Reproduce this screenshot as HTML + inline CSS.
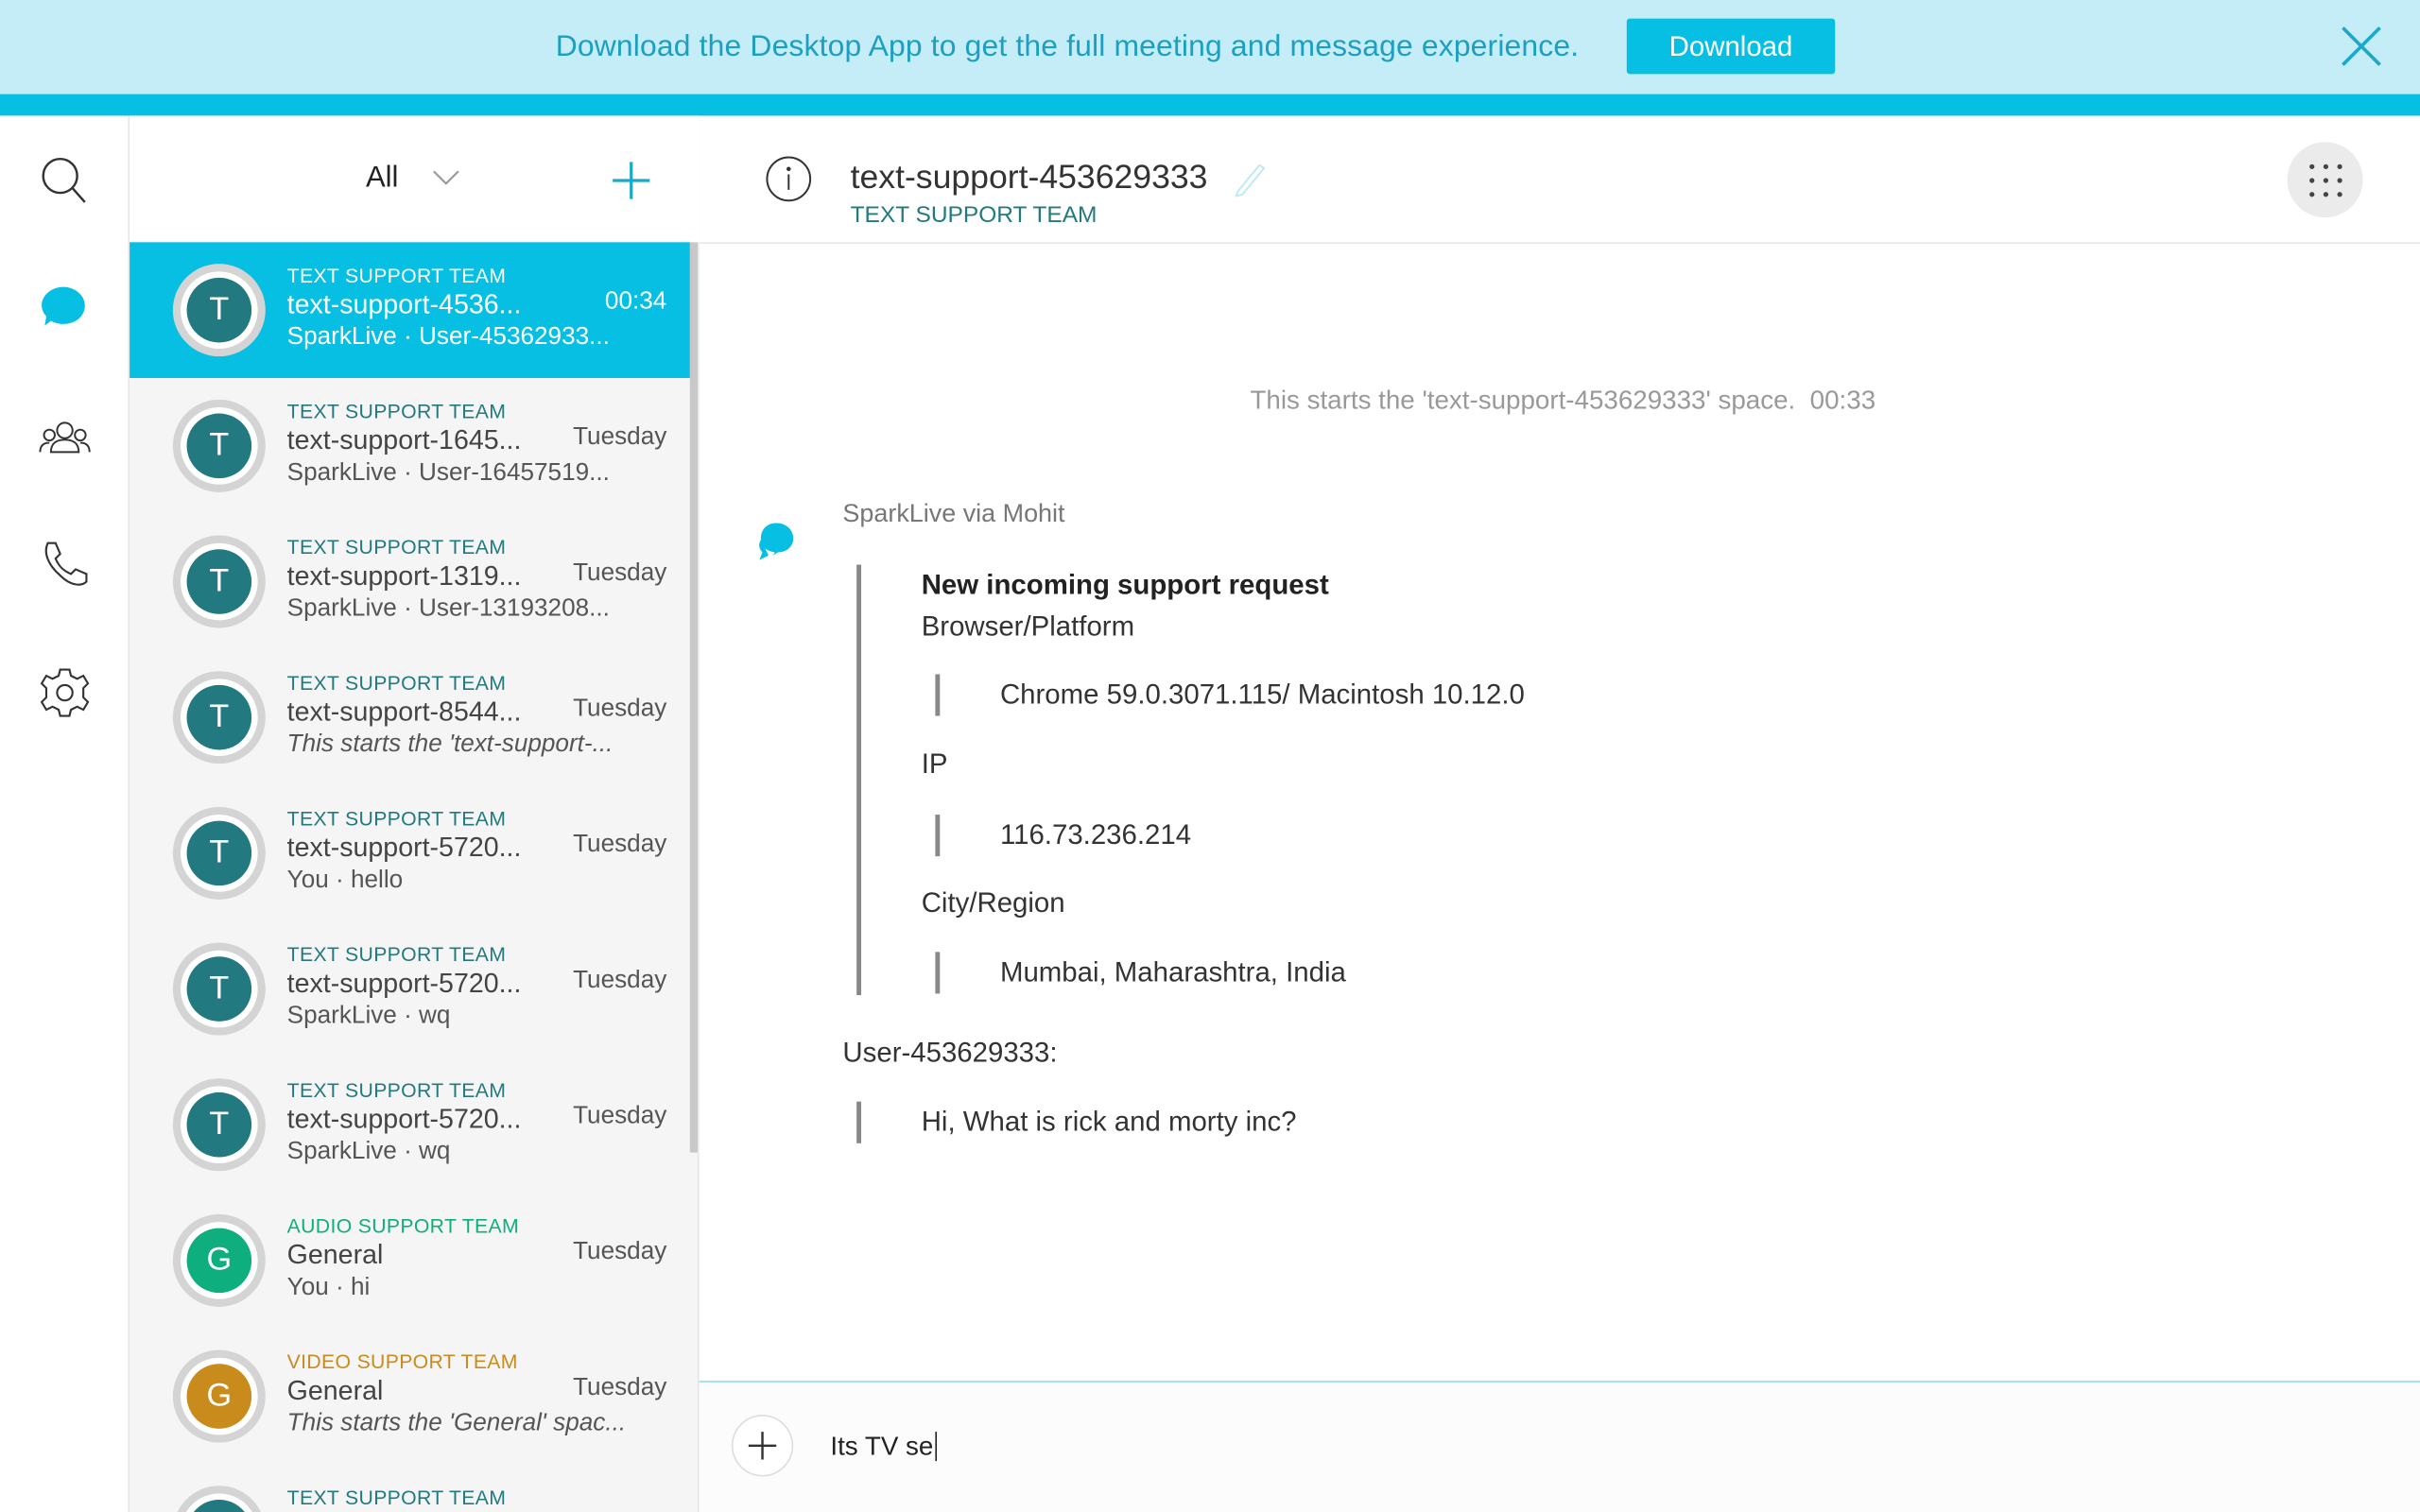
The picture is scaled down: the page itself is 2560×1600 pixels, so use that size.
<!DOCTYPE html>
<html><head><meta charset="utf-8"><style>
*{box-sizing:border-box;margin:0;padding:0}
html,body{width:2560px;height:1600px;overflow:hidden;background:#fff}
#w{position:absolute;left:0;top:0;width:1568px;height:980px;overflow:hidden;transform:scale(1.632653);transform-origin:0 0;font-family:"Liberation Sans",sans-serif;color:#333}
.a{position:absolute}
.banner{left:0;top:0;width:1568px;height:61px;background:#c4edf7}
.strip{left:0;top:61px;width:1568px;height:14px;background:#07bfe3}
.btxt{left:360px;top:19px;font-size:19.5px;color:#1c9fc0;letter-spacing:0.1px}
.dl{left:1054px;top:12px;width:135px;height:36px;background:#07bfe3;color:#fff;font-size:18px;text-align:center;line-height:36px;border-radius:2px}
.nav{left:0;top:75px;width:84px;height:905px;background:#fff;border-right:1px solid #e6e6e6}
.list{left:84px;top:75px;width:369px;height:905px;background:#f5f5f5;border-right:1px solid #e6e6e6}
.lhead{left:84px;top:75px;width:369px;height:82px;background:#fff}
.scroll{left:447px;top:157px;width:5px;height:590px;background:#c8c8c8}
.row{position:absolute;left:84px;width:363px;height:88px;overflow:hidden}
.av{position:absolute;left:28px;top:14px;width:60px;height:60px;border-radius:50%;background:#d4d4d4}
.av i{position:absolute;left:5px;top:5px;width:50px;height:50px;border-radius:50%;background:#fff}
.av b{position:absolute;left:9px;top:9px;width:42px;height:42px;border-radius:50%;background:#227a80;color:#fff;font-weight:normal;font-size:21px;text-align:center;line-height:42px}
.t1{position:absolute;left:102px;top:14px;font-size:13px;color:#227a80;letter-spacing:0.2px}
.t2{position:absolute;left:102px;top:30px;font-size:17.5px;color:#444}
.t3{position:absolute;left:102px;top:53px;font-size:16px;color:#555}
.tm{position:absolute;right:15px;top:30px;font-size:16px;color:#555}
.sel{background:#07bfe3}
.sel .t1,.sel .t2,.sel .t3,.sel .tm{color:#fff}
.qbar{position:absolute;width:3px;background:#888}
.body{font-size:18px;color:#333}
</style></head><body><div id="w">
<div class="a banner"></div><div class="a strip"></div>
<div class="a btxt">Download the Desktop App to get the full meeting and message experience.</div>
<div class="a dl">Download</div>
<svg class="a" style="left:1515px;top:15px" width="30" height="30"><path d="M3 3L27 27M27 3L3 27" stroke="#1aa9c9" stroke-width="2.2"/></svg>
<div class="a nav"></div>
<svg class="a" style="left:26px;top:100px" width="32" height="34"><circle cx="13" cy="14" r="11" fill="none" stroke="#333" stroke-width="1.5"/><path d="M21 22L29 31" stroke="#333" stroke-width="1.5"/></svg>
<svg class="a" style="left:26px;top:184px" width="32" height="32"><path d="M15 2C22 2 29 7 29 14C29 21 23 26 15 26C12 26 9 25 7 24L3 27L4 21C2 19 1 16 1 14C1 7 8 2 15 2Z" fill="#07bfe3"/></svg>
<svg class="a" style="left:25px;top:272px" width="34" height="24" fill="none" stroke="#333" stroke-width="1.2"><circle cx="17" cy="7" r="5"/><path d="M8 21C8 15 12 13 17 13C22 13 26 15 26 21Z"/><circle cx="7" cy="10" r="3.5"/><path d="M1 21C1 17 3 15 7 15"/><circle cx="27" cy="10" r="3.5"/><path d="M33 21C33 17 31 15 27 15"/></svg>
<svg class="a" style="left:26px;top:350px" width="32" height="32" fill="none" stroke="#333" stroke-width="1.3"><path d="M5 2L10 2L13 9L10 12C12 17 15 20 20 22L23 19L30 22L30 27C27 30 20 30 13 23C5 16 2 8 5 2Z"/></svg>
<svg class="a" style="left:25px;top:432px" width="34" height="34" fill="none" stroke="#333" stroke-width="1.3"><circle cx="17" cy="17" r="5"/><path d="M14 2H20L21 6L25 8L29 6L32 11L29 14V20L32 23L29 28L25 26L21 28L20 32H14L13 28L9 26L5 28L2 23L5 20V14L2 11L5 6L9 8L13 6Z"/></svg>
<div class="a list"></div><div class="a lhead"></div>
<div class="a" style="left:237px;top:105px;font-size:19px;color:#222">All</div>
<svg class="a" style="left:279px;top:108px" width="20" height="14"><path d="M2 3L10 11L18 3" fill="none" stroke="#999" stroke-width="1.3"/></svg>
<svg class="a" style="left:396px;top:104px" width="26" height="26"><path d="M13 1V25M1 13H25" stroke="#1aa9c9" stroke-width="2"/></svg>
<div class="a scroll"></div>
<div class="row sel" style="top:157px"><div class="av"><i></i><b>T</b></div><div class="t1">TEXT SUPPORT TEAM</div><div class="t2">text-support-4536...</div><div class="tm">00:34</div><div class="t3">SparkLive · User-45362933...</div></div>
<div class="row" style="top:245px"><div class="av"><i></i><b>T</b></div><div class="t1">TEXT SUPPORT TEAM</div><div class="t2">text-support-1645...</div><div class="tm">Tuesday</div><div class="t3">SparkLive · User-16457519...</div></div>
<div class="row" style="top:333px"><div class="av"><i></i><b>T</b></div><div class="t1">TEXT SUPPORT TEAM</div><div class="t2">text-support-1319...</div><div class="tm">Tuesday</div><div class="t3">SparkLive · User-13193208...</div></div>
<div class="row" style="top:421px"><div class="av"><i></i><b>T</b></div><div class="t1">TEXT SUPPORT TEAM</div><div class="t2">text-support-8544...</div><div class="tm">Tuesday</div><div class="t3"><i>This starts the 'text-support-...</i></div></div>
<div class="row" style="top:509px"><div class="av"><i></i><b>T</b></div><div class="t1">TEXT SUPPORT TEAM</div><div class="t2">text-support-5720...</div><div class="tm">Tuesday</div><div class="t3">You · hello</div></div>
<div class="row" style="top:597px"><div class="av"><i></i><b>T</b></div><div class="t1">TEXT SUPPORT TEAM</div><div class="t2">text-support-5720...</div><div class="tm">Tuesday</div><div class="t3">SparkLive · wq</div></div>
<div class="row" style="top:685px"><div class="av"><i></i><b>T</b></div><div class="t1">TEXT SUPPORT TEAM</div><div class="t2">text-support-5720...</div><div class="tm">Tuesday</div><div class="t3">SparkLive · wq</div></div>
<div class="row" style="top:773px"><div class="av"><i></i><b style="background:#0fae7e">G</b></div><div class="t1" style="color:#0fae7e">AUDIO SUPPORT TEAM</div><div class="t2">General</div><div class="tm">Tuesday</div><div class="t3">You · hi</div></div>
<div class="row" style="top:861px"><div class="av"><i></i><b style="background:#c98b1c">G</b></div><div class="t1" style="color:#c98b1c">VIDEO SUPPORT TEAM</div><div class="t2">General</div><div class="tm">Tuesday</div><div class="t3"><i>This starts the 'General' spac...</i></div></div>
<div class="row" style="top:949px;height:31px"><div class="av"><i></i><b>T</b></div><div class="t1">TEXT SUPPORT TEAM</div></div>
<svg class="a" style="left:496px;top:101px" width="30" height="30" fill="none" stroke="#333" stroke-width="1.2"><circle cx="15" cy="15" r="14"/><path d="M15 12V22"/><circle cx="15" cy="8.5" r="0.8" fill="#333"/></svg>
<div class="a" style="left:551px;top:102px;font-size:21.8px;color:#333">text-support-453629333</div>
<svg class="a" style="left:798px;top:104px" width="24" height="24"><path d="M4 20L18 3L21 5L7 22L3 23Z" fill="none" stroke="#bfeaf4" stroke-width="1.2"/></svg>
<div class="a" style="left:551px;top:131px;font-size:15px;color:#227a80">TEXT SUPPORT TEAM</div>
<div class="a" style="left:1482px;top:92px;width:49px;height:49px;border-radius:50%;background:#ebebeb"></div>
<svg class="a" style="left:1494px;top:104px" width="26" height="26" fill="#444"><circle cx="4" cy="4" r="1.6"/><circle cx="13" cy="4" r="1.6"/><circle cx="22" cy="4" r="1.6"/><circle cx="4" cy="13" r="1.6"/><circle cx="13" cy="13" r="1.6"/><circle cx="22" cy="13" r="1.6"/><circle cx="4" cy="22" r="1.6"/><circle cx="13" cy="22" r="1.6"/><circle cx="22" cy="22" r="1.6"/></svg>
<div class="a" style="left:453px;top:157px;width:1115px;height:1px;background:#e8e8e8"></div>
<div class="a" style="left:810px;top:250px;font-size:17px;color:#999">This starts the 'text-support-453629333' space.&nbsp; 00:33</div>
<svg class="a" style="left:490px;top:337px" width="28" height="28"><path d="M13 2C19 2 24 6 24 12C24 17 20 21 14 21L11 23L12 21C6 20 3 17 3 12C3 6 7 2 13 2Z" fill="#07bfe3"/><path d="M3 13C1 16 2 19 4 21L2 26L8 23" fill="#07bfe3"/></svg>
<div class="a" style="left:546px;top:324px;font-size:16.5px;color:#777">SparkLive via Mohit</div>
<div class="qbar" style="left:555px;top:366px;height:279px"></div>
<div class="a body" style="left:597px;top:369px;font-weight:bold;color:#222">New incoming support request</div>
<div class="a body" style="left:597px;top:396px">Browser/Platform</div>
<div class="qbar" style="left:606px;top:437px;height:27px"></div>
<div class="a body" style="left:648px;top:440px">Chrome 59.0.3071.115/ Macintosh 10.12.0</div>
<div class="a body" style="left:597px;top:485px">IP</div>
<div class="qbar" style="left:606px;top:528px;height:27px"></div>
<div class="a body" style="left:648px;top:531px">116.73.236.214</div>
<div class="a body" style="left:597px;top:575px">City/Region</div>
<div class="qbar" style="left:606px;top:617px;height:27px"></div>
<div class="a body" style="left:648px;top:620px">Mumbai, Maharashtra, India</div>
<div class="a body" style="left:546px;top:672px">User-453629333:</div>
<div class="qbar" style="left:555px;top:714px;height:27px"></div>
<div class="a body" style="left:597px;top:717px">Hi, What is rick and morty inc?</div>
<div class="a" style="left:453px;top:895px;width:1115px;height:1px;background:#8fd9ea"></div>
<div class="a" style="left:453px;top:896px;width:1115px;height:84px;background:#fcfcfc"></div>
<div class="a" style="left:474px;top:917px;width:40px;height:40px;border-radius:50%;border:1px solid #ddd;background:#fff"></div>
<svg class="a" style="left:484px;top:927px" width="20" height="20"><path d="M10 1V19M1 10H19" stroke="#333" stroke-width="1.5"/></svg>
<div class="a" style="left:538px;top:928px;font-size:17px;color:#222">Its TV se<span style="border-left:1.5px solid #222;margin-left:1px"></span></div>
</div></body></html>
